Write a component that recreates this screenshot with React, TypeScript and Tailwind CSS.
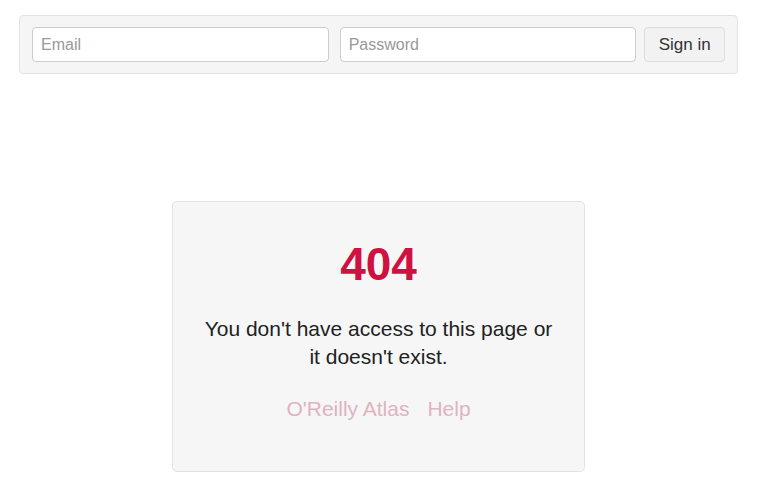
export default function App() {
	return (
		<div className="min-h-[496px] w-[760px] bg-white font-['Liberation_Sans',Arial,sans-serif] text-[#222]">
			<div className="pt-[15px] px-[19px]">
				<form className="flex items-center gap-[8px] rounded-[4px] border border-[#e3e3e3] bg-[#f5f5f5] px-[12px] py-[11px] w-[719px]">
					<input
						type="email"
						placeholder="Email"
						className="h-[35px] w-[298px] rounded-[4px] border border-[#ccc] bg-white px-[8px] text-[16px] placeholder:text-[#999] outline-none"
					/>
					<input
						type="password"
						placeholder="Password"
						className="ml-[3px] h-[35px] w-[298px] rounded-[4px] border border-[#ccc] bg-white px-[8px] text-[16px] placeholder:text-[#999] outline-none"
					/>
					<button
						type="button"
						className="h-[35px] w-[81px] rounded-[4px] border border-[#ddd] bg-[#f2f2f2] text-[17px] text-[#333]"
					>
						Sign in
					</button>
				</form>
			</div>

			<div className="mt-[127px] flex justify-center">
				<div className="w-[413px] h-[271px] ml-[-3px] rounded-[5px] border border-[#e3e3e3] bg-[#f6f6f6] pt-[37px] text-center">
					<h1 className="text-[46px] leading-[50px] font-bold text-[#cf1141]">404</h1>
					<p className="mt-[26px] px-[28px] text-[21px] leading-[28px] text-[#222]">
						You don't have access to this page or it doesn't exist.
					</p>
					<div className="mt-[22px] flex justify-center gap-[18px] text-[21px] text-[#e0b3c1]">
						<a href="#">O'Reilly Atlas</a>
						<a href="#">Help</a>
					</div>
				</div>
			</div>
		</div>
	);
}
